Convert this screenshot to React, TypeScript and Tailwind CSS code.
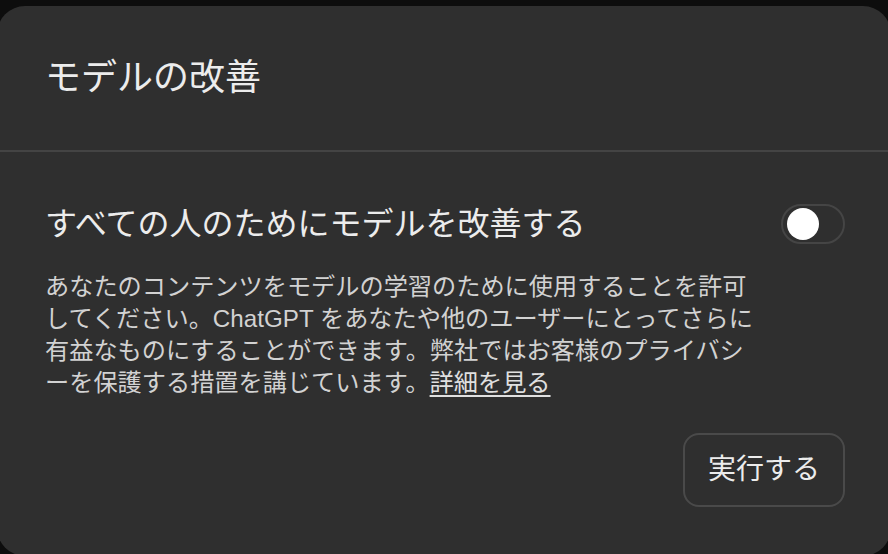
export default function App() {
  const font = { fontFamily: '"Liberation Sans", "Noto Sans CJK JP", sans-serif' };
  return (
    <div className="h-[554px] w-[888px] overflow-hidden bg-[#0d0d0d] pt-[6px]" style={font}>
      <div className="ml-[-3px] flex h-[550px] w-[894px] flex-col rounded-[28px] bg-[#2f2f2f]">
        <div className="flex h-[144px] items-center pl-[48px]">
          <h1 className="text-[36px] leading-none text-[#ececec]">モデルの改善</h1>
        </div>
        <div className="h-[2px] bg-[#444444]" />
        <div className="flex flex-col pl-[48px] pr-[46px] pt-[52px]">
          <div className="flex h-[40px] items-center justify-between">
            <span className="text-[32px] leading-none text-[#ececec]">すべての人のためにモデルを改善する</span>
            <button className="flex h-[40px] w-[64px] items-center rounded-full border-2 border-[#454545] px-[4px]">
              <span className="h-[32px] w-[32px] rounded-full bg-white" />
            </button>
          </div>
          <p className="mt-[27px] text-[24.2px] leading-[32px] text-[#d2d2d2]">
            あなたのコンテンツをモデルの学習のために使用することを許可
            <br />
            してください。ChatGPT をあなたや他のユーザーにとってさらに
            <br />
            有益なものにすることができます。弊社ではお客様のプライバシ
            <br />
            ーを保護する措置を講じています。<span className="underline underline-offset-[4px] decoration-2 text-[#e0e0e0]">詳細を見る</span>
          </p>
          <div className="mt-[34px] flex justify-end">
            <button className="flex h-[74px] w-[162px] items-center justify-center rounded-[16px] border-2 border-[#4a4a4a] text-[28px] text-[#ececec]">
              実行する
            </button>
          </div>
        </div>
      </div>
    </div>
  );
}
